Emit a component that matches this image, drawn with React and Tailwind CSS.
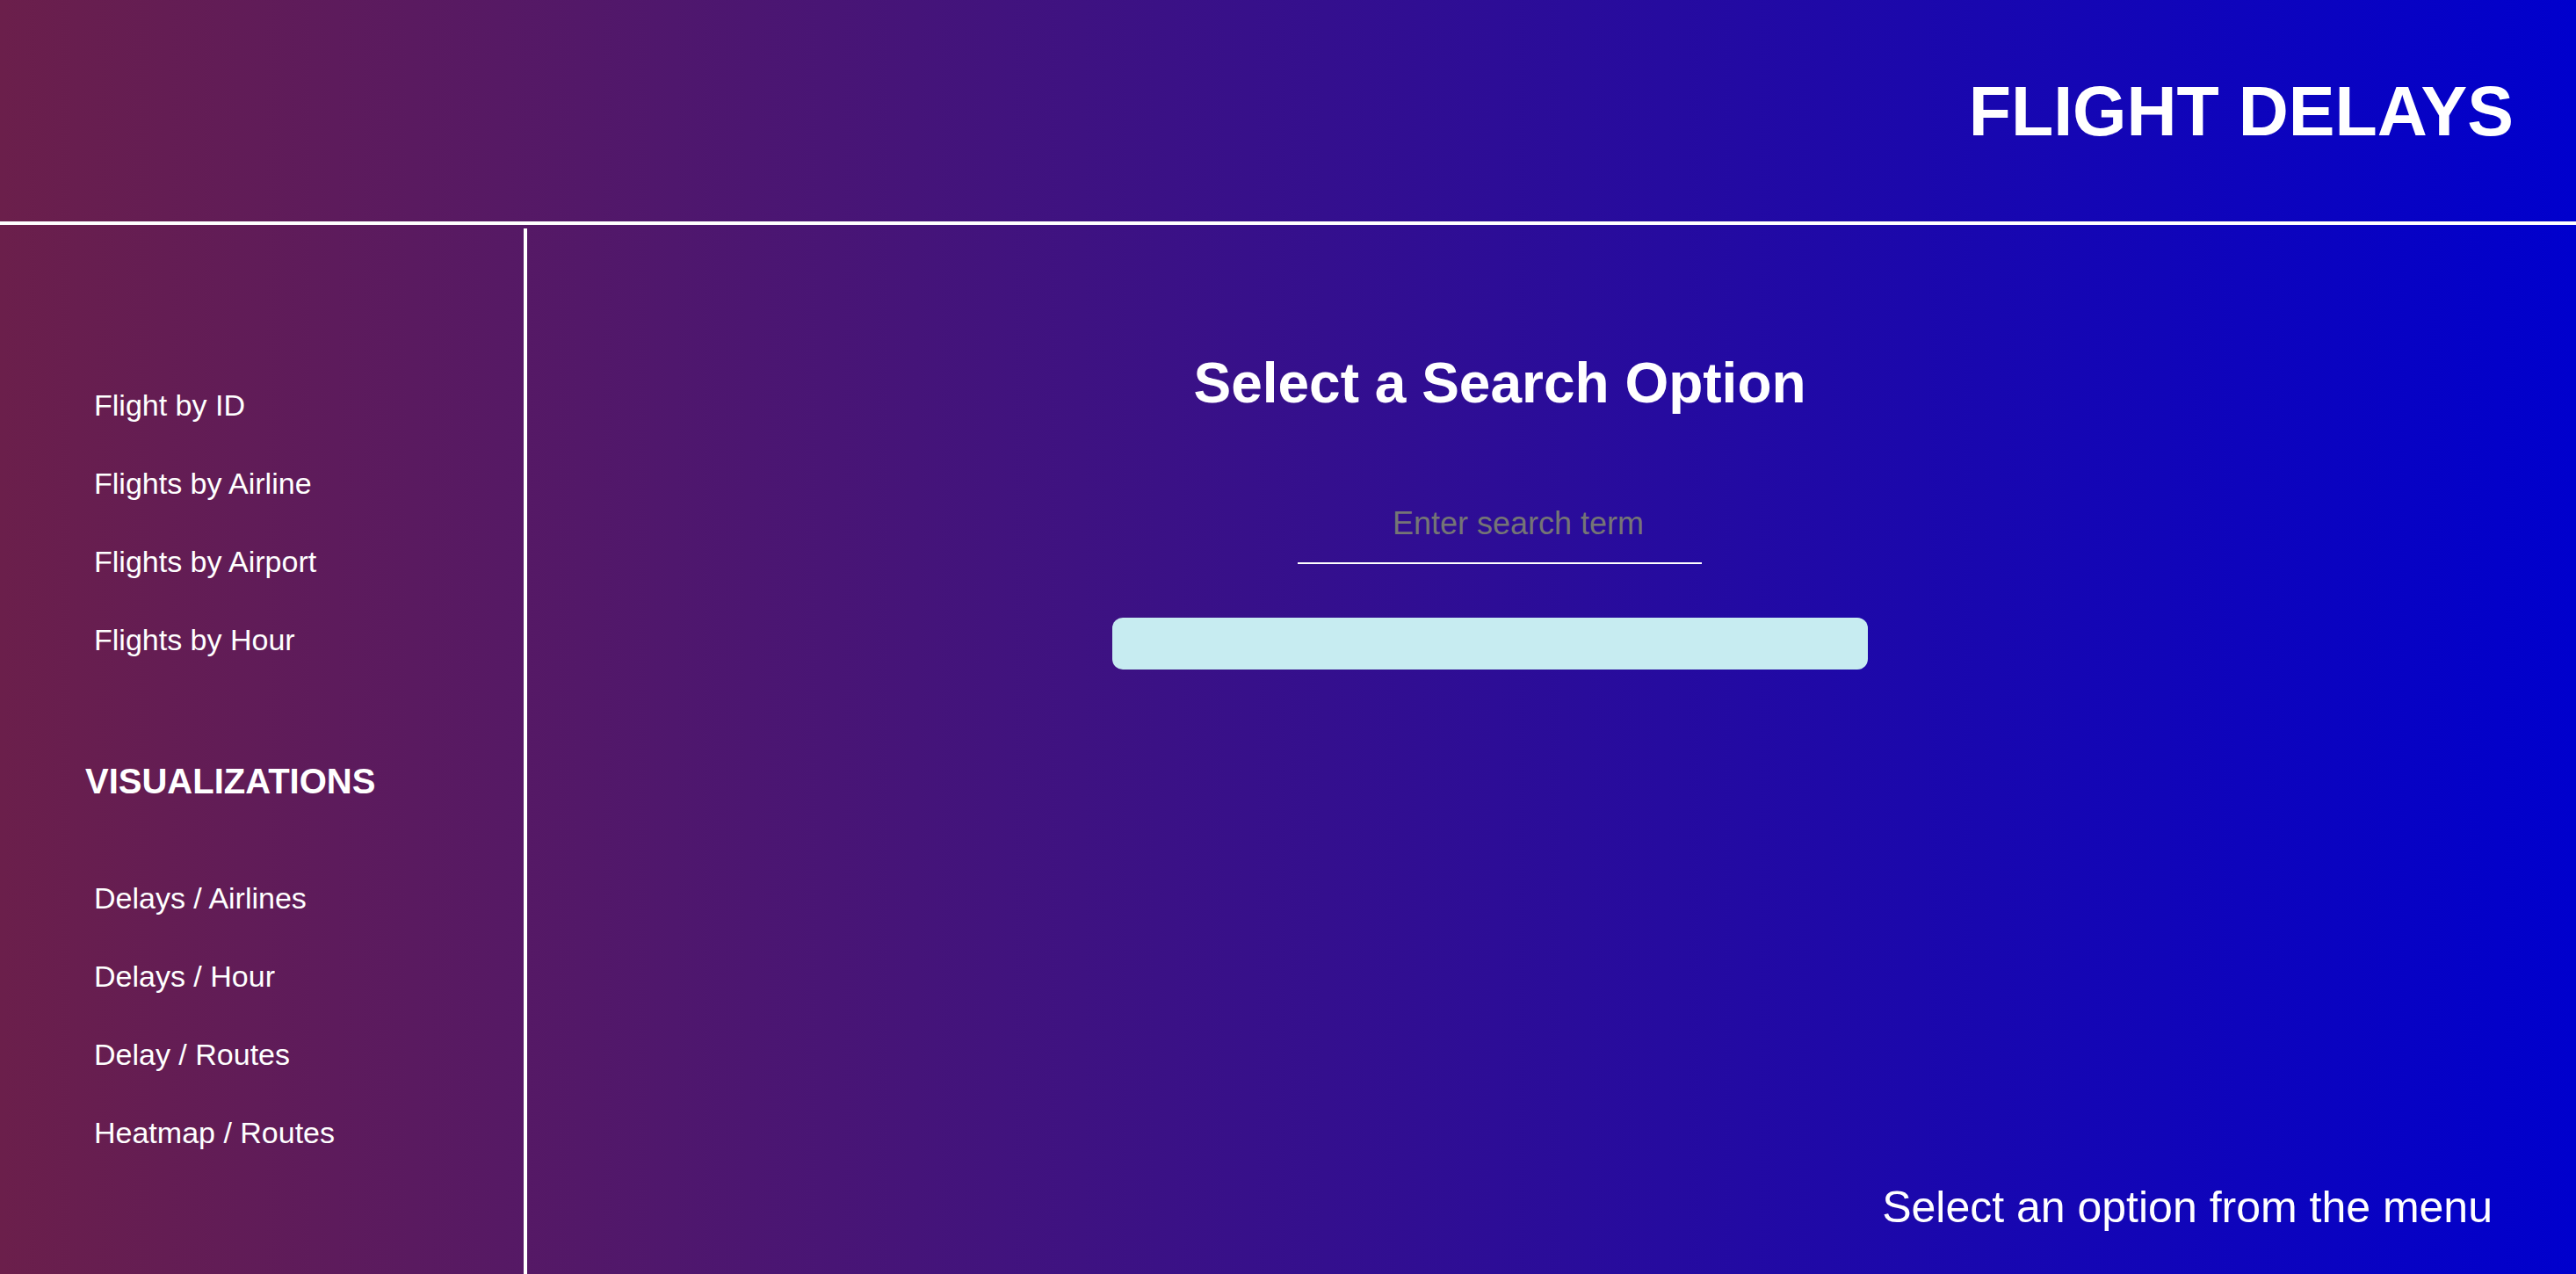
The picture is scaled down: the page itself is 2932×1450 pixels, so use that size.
import { useState } from 'react';

const searchItems = ['Flight by ID', 'Flights by Airline', 'Flights by Airport', 'Flights by Hour'];
const vizItems = ['Delays / Airlines', 'Delays / Hour', 'Delay / Routes', 'Heatmap / Routes'];

export default function App() {
    const [term, setTerm] = useState('');

    return (
        <div className="h-[1450px] w-full flex flex-col overflow-hidden text-white bg-[linear-gradient(to_right,#6b1f4b,#0000cd)] font-['Liberation_Sans',Arial,sans-serif]">

            {/* HEADER */}
            <header className="h-[256px] shrink-0 flex items-center justify-end pr-[71px] border-b-[4px] border-white">
                <h1 className="text-[79px] font-bold leading-none">FLIGHT DELAYS</h1>
            </header>

            <div className="flex flex-1 pt-[4px]">

                {/* SIDEBAR */}
                <aside className="w-[600px] shrink-0 border-r-[4px] border-white pt-[157px]">
                    <ul className="pl-[107px]">
                        {searchItems.map((item) => (
                            <li key={item} className="h-[89px] leading-[89px] text-[34px] cursor-pointer">{item}</li>
                        ))}
                    </ul>
                    <h3 className="pl-[97px] mt-[72px] h-[89px] leading-[89px] text-[40px] font-bold">VISUALIZATIONS</h3>
                    <ul className="pl-[107px] mt-[44px]">
                        {vizItems.map((item) => (
                            <li key={item} className="h-[89px] leading-[89px] text-[34px] cursor-pointer">{item}</li>
                        ))}
                    </ul>
                </aside>

                {/* MAIN */}
                <main className="flex-1 flex flex-col">
                    <div className="flex flex-col items-center pr-[118px] pt-[136px]">
                        <h2 className="text-[64px] font-bold leading-[80px]">Select a Search Option</h2>
                        <input
                            value={term}
                            onChange={(e) => setTerm(e.target.value)}
                            placeholder="Enter search term"
                            className="mt-[76px] w-[460px] h-[90px] pl-[42px] bg-transparent border-b-[2px] border-white text-center text-[36px] text-white placeholder:text-[#757575] outline-none"
                        />
                        <button className="mt-[61px] w-[860px] h-[59px] rounded-[12px] bg-[#c7ecf1] ml-[-22px]"></button>
                    </div>
                    <div className="mt-auto flex justify-end pr-[95px] pb-[51px]">
                        <p className="text-[50px] leading-none">Select an option from the menu</p>
                    </div>
                </main>
            </div>
        </div>
    );
}
